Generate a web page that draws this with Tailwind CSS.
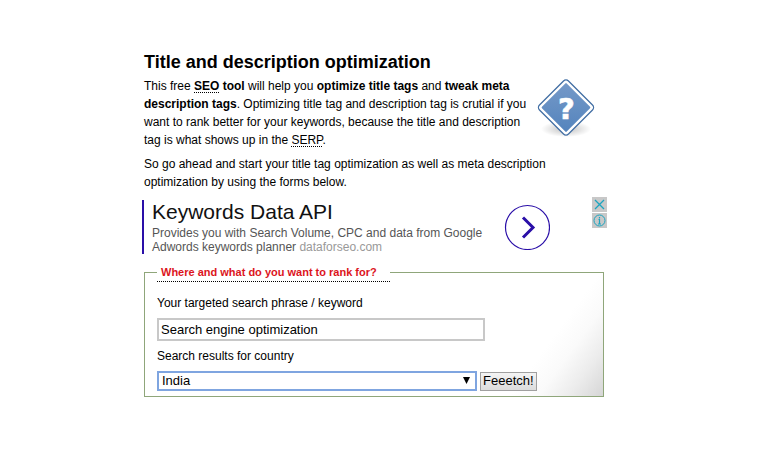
<!DOCTYPE html>
<html lang="en">
<head>
<meta charset="utf-8">
<title>Title and description optimization</title>
<script src="https://cdn.jsdelivr.net/npm/@tailwindcss/browser@4"></script>
</head>
<body class="bg-white font-['Liberation_Sans',Arial,sans-serif] text-xs leading-[18px] text-black">
<main class="ml-36 mr-4 max-w-[460px] pt-[50px]">
  <h1 class="text-lg leading-6 font-bold">Title and description optimization</h1>
  <div class="mt-[3px] flex items-start justify-between">
    <p class="max-w-96">This free <strong><abbr class="underline decoration-dotted decoration-1 underline-offset-2 [text-decoration-skip-ink:none]">SEO</abbr> tool</strong> will help you <strong>optimize title tags</strong> and <strong>tweak meta description tags</strong>. Optimizing title tag and description tag is crutial if you want to rank better for your keywords, because the title and description tag is what shows up in the <abbr class="underline decoration-dotted decoration-1 underline-offset-2 [text-decoration-skip-ink:none]">SERP</abbr>.</p>
    <svg class="mr-2 h-16 w-16 shrink-0" viewBox="0 0 64 64" role="img" aria-label="Help">
      <defs>
        <linearGradient id="blue" x1="0" y1="0" x2="1" y2="1"><stop offset="0" stop-color="#7599c8"/><stop offset="1" stop-color="#5484bd"/></linearGradient>
        <radialGradient id="shade"><stop offset="0" stop-color="#000" stop-opacity=".25"/><stop offset="1" stop-color="#000" stop-opacity="0"/></radialGradient>
      </defs>
      <ellipse cx="34" cy="52" rx="25" ry="8" fill="url(#shade)"/>
      <rect x="13.500" y="10" width="41" height="41" rx="3.500" transform="rotate(45 34 30.500)" fill="#fff" stroke="#4470a5" stroke-width="1.300"/>
      <rect x="16.500" y="13" width="35" height="35" rx="1" transform="rotate(45 34 30.500)" fill="url(#blue)"/>
      <text x="34.500" y="41.500" text-anchor="middle" font-family="DejaVu Sans" font-weight="bold" font-size="29" fill="#fff" stroke="#fff" stroke-width=".6">?</text>
    </svg>
  </div>
  <p class="mt-1.5 max-w-[410px]">So go ahead and start your title tag optimization as well as meta description optimization by using the forms below.</p>

  <aside class="-ml-0.5 -mr-[3px] mt-[9px] flex items-start">
    <a href="#" class="flex h-[54px] flex-1 items-center border-l-2 border-[#2a0fa8] pl-2">
      <span class="w-[352px]">
        <span class="block pb-0.5 text-[21px] leading-6 text-[#111]">Keywords Data API</span>
        <span class="block leading-[14px] text-[#555]">Provides you with Search Volume, CPC and data from Google Adwords keywords planner <span class="text-[#999]">dataforseo.com</span></span>
      </span>
      <svg class="h-[46px] w-[46px]" viewBox="0 0 46 46" fill="none" stroke="#2a0fa8" aria-hidden="true"><circle cx="23.500" cy="23.500" r="22" stroke-width="1.200"/><path d="M19 13.500 29 23.500 19 33.500" stroke-width="3"/></svg>
    </a>
    <div class="-mt-1 flex flex-col gap-px pt-px">
      <button type="button" aria-label="Close ad" class="bg-[#c8c8c8]"><svg class="h-[15px] w-[15px]" viewBox="0 0 15 15" stroke="#1ba5c0" stroke-width="1.300"><path d="m3 3 9 9m0-9-9 9"/></svg></button>
      <button type="button" aria-label="Ad information" class="bg-[#c8c8c8]"><svg class="h-[15px] w-[15px]" viewBox="0 0 15 15" stroke="#1ba5c0" fill="none"><circle cx="7.500" cy="7.500" r="5.500"/><path d="M7.500 4v1.500M6.500 6.500h1V11M6 11h3" stroke-width="1.200"/></svg></button>
    </div>
  </aside>

  <form>
    <fieldset class="mt-[9px] border border-[#8fa67a] bg-[linear-gradient(306deg,#d6d6d6,#ececec_28px,#fafafa_52px,#fff_75px)] px-3 pb-[5px]">
      <legend class="min-w-[233px] border-b border-dotted border-black px-1 text-[11px] font-bold text-[#dc141c]">Where and what do you want to rank for?</legend>
      <label for="phrase" class="mt-3 block">Your targeted search phrase / keyword</label>
      <input id="phrase" type="text" value="Search engine optimization" class="mt-1.5 block h-[23px] w-[328px] max-w-full border-2 border-[#c8c8c8] bg-white px-0.5 text-[13px]">
      <label for="country" class="mt-1.5 block">Search results for country</label>
      <div class="mt-1.5 flex items-center gap-[3px]">
        <div class="relative">
          <select id="country" class="block h-5 w-80 appearance-none border-2 border-[#7fa5e0] bg-white px-[3px] text-[13px] leading-4"><option>India</option></select>
          <svg class="pointer-events-none absolute right-[7px] top-1.5 h-[7px] w-[7px]" viewBox="0 0 7 7" aria-hidden="true"><path d="M0 0h7L3.500 7Z"/></svg>
        </div>
        <button type="submit" class="h-[19px] border border-[#a0a0a0] bg-linear-to-b from-[#f4f4f4] to-[#dcdcdc] px-0.5 text-[13px] leading-4">Feeetch!</button>
      </div>
    </fieldset>
  </form>
</main>
</body>
</html>
